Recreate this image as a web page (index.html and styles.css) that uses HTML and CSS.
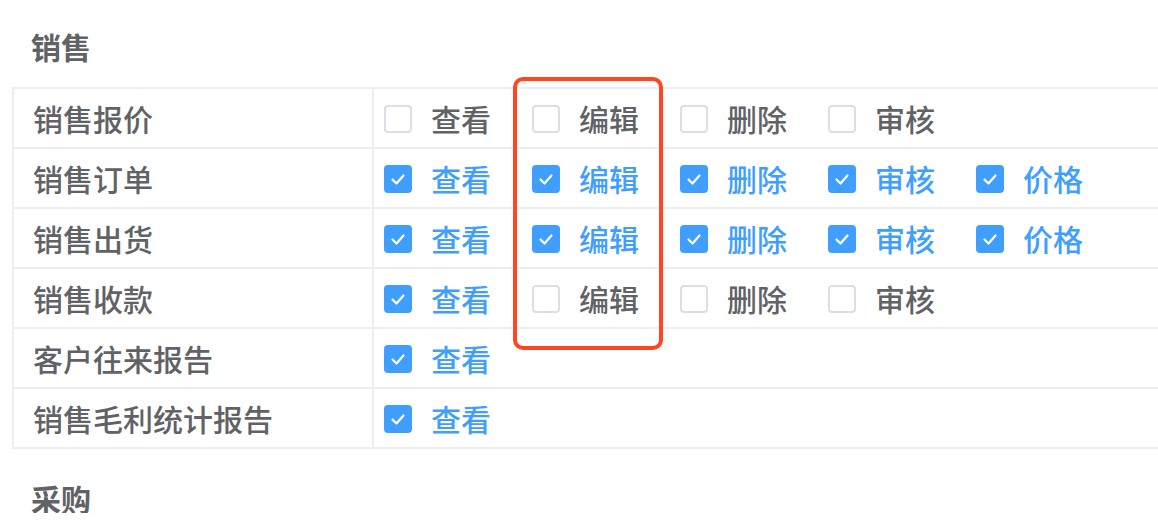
FILE: index.html
```html
<!DOCTYPE html>
<html lang="zh-CN">
<head>
  <meta charset="UTF-8" />
  <meta name="viewport" content="width=device-width, initial-scale=1.0"/>
  <title>权限设置</title>
  <link rel="stylesheet" href="styles.css">
</head>
<body>

  <div class="page">
    <h3 class="group-title">销售</h3>
    <div class="perm-table">
      <div class="perm-row">
        <div class="perm-name">销售报价</div>
        <div class="perm-ops">
          <label class="op"><span class="box"></span><span class="op-text">查看</span></label>
          <label class="op"><span class="box"></span><span class="op-text">编辑</span></label>
          <label class="op"><span class="box"></span><span class="op-text">删除</span></label>
          <label class="op"><span class="box"></span><span class="op-text">审核</span></label>
        </div>
      </div>
      <div class="perm-row">
        <div class="perm-name">销售订单</div>
        <div class="perm-ops">
          <label class="op checked"><span class="box"><svg viewBox="0 0 28 28"><polyline points="8.5,14.5 12.5,18.5 19.5,10.5"/></svg></span><span class="op-text">查看</span></label>
          <label class="op checked"><span class="box"><svg viewBox="0 0 28 28"><polyline points="8.5,14.5 12.5,18.5 19.5,10.5"/></svg></span><span class="op-text">编辑</span></label>
          <label class="op checked"><span class="box"><svg viewBox="0 0 28 28"><polyline points="8.5,14.5 12.5,18.5 19.5,10.5"/></svg></span><span class="op-text">删除</span></label>
          <label class="op checked"><span class="box"><svg viewBox="0 0 28 28"><polyline points="8.5,14.5 12.5,18.5 19.5,10.5"/></svg></span><span class="op-text">审核</span></label>
          <label class="op checked"><span class="box"><svg viewBox="0 0 28 28"><polyline points="8.5,14.5 12.5,18.5 19.5,10.5"/></svg></span><span class="op-text">价格</span></label>
        </div>
      </div>
      <div class="perm-row">
        <div class="perm-name">销售出货</div>
        <div class="perm-ops">
          <label class="op checked"><span class="box"><svg viewBox="0 0 28 28"><polyline points="8.5,14.5 12.5,18.5 19.5,10.5"/></svg></span><span class="op-text">查看</span></label>
          <label class="op checked"><span class="box"><svg viewBox="0 0 28 28"><polyline points="8.5,14.5 12.5,18.5 19.5,10.5"/></svg></span><span class="op-text">编辑</span></label>
          <label class="op checked"><span class="box"><svg viewBox="0 0 28 28"><polyline points="8.5,14.5 12.5,18.5 19.5,10.5"/></svg></span><span class="op-text">删除</span></label>
          <label class="op checked"><span class="box"><svg viewBox="0 0 28 28"><polyline points="8.5,14.5 12.5,18.5 19.5,10.5"/></svg></span><span class="op-text">审核</span></label>
          <label class="op checked"><span class="box"><svg viewBox="0 0 28 28"><polyline points="8.5,14.5 12.5,18.5 19.5,10.5"/></svg></span><span class="op-text">价格</span></label>
        </div>
      </div>
      <div class="perm-row">
        <div class="perm-name">销售收款</div>
        <div class="perm-ops">
          <label class="op checked"><span class="box"><svg viewBox="0 0 28 28"><polyline points="8.5,14.5 12.5,18.5 19.5,10.5"/></svg></span><span class="op-text">查看</span></label>
          <label class="op"><span class="box"></span><span class="op-text">编辑</span></label>
          <label class="op"><span class="box"></span><span class="op-text">删除</span></label>
          <label class="op"><span class="box"></span><span class="op-text">审核</span></label>
        </div>
      </div>
      <div class="perm-row">
        <div class="perm-name">客户往来报告</div>
        <div class="perm-ops">
          <label class="op checked"><span class="box"><svg viewBox="0 0 28 28"><polyline points="8.5,14.5 12.5,18.5 19.5,10.5"/></svg></span><span class="op-text">查看</span></label>
        </div>
      </div>
      <div class="perm-row">
        <div class="perm-name">销售毛利统计报告</div>
        <div class="perm-ops">
          <label class="op checked"><span class="box"><svg viewBox="0 0 28 28"><polyline points="8.5,14.5 12.5,18.5 19.5,10.5"/></svg></span><span class="op-text">查看</span></label>
        </div>
      </div>
    </div>

    <!-- highlight around the edit column -->
    <div class="highlight"></div>

    <h3 class="group-title next">采购</h3>
  </div>

</body>
</html>
```

FILE: styles.css
```css
body {
  margin: 0;
  background: #fff;
  font-family: "Noto Sans CJK SC", "Noto Sans", sans-serif;
  color: #606266;
  overflow: hidden;
}

.page {
  position: relative;
  padding-top: 30px;
}

.group-title {
  margin: 0 0 25px 31px;
  font-size: 30px;
  line-height: 32px;
  font-weight: 600;
  color: #606266;
}

.group-title.next {
  margin-top: 34px;
  margin-bottom: 0;
  line-height: 30px;
}

.perm-table {
  margin-left: 12px;
  width: 1200px;
  border: 2px solid #ebeef5;
  border-right: none;
}

.perm-row {
  display: flex;
  height: 58px;
  border-bottom: 2px solid #ebeef5;
}

.perm-row:last-child {
  border-bottom: none;
}

.perm-name {
  width: 339px;
  padding-left: 19px;
  border-right: 2px solid #ebeef5;
  display: flex;
  align-items: center;
  font-size: 30px;
  font-weight: 500;
}

.perm-ops {
  display: flex;
  align-items: center;
  padding-left: 10px;
}

.op {
  display: flex;
  align-items: center;
  width: 108px;
  margin-right: 40px;
  cursor: pointer;
}

.box {
  box-sizing: border-box;
  width: 28px;
  height: 28px;
  border: 2px solid #dcdfe6;
  border-radius: 4px;
  background: #fff;
  margin-top: 2px;
}

.box svg {
  display: block;
  width: 28px;
  height: 28px;
  margin: -2px;
}

.box polyline {
  fill: none;
  stroke: #fff;
  stroke-width: 2.2;
  stroke-linecap: round;
  stroke-linejoin: round;
}

.op-text {
  margin-left: 19px;
  font-size: 30px;
  line-height: 32px;
  font-weight: 500;
  color: #606266;
}

.op.checked .box {
  background: #409eff;
  border-color: #409eff;
}

.op.checked .op-text {
  color: #409eff;
}

.highlight {
  position: absolute;
  left: 513px;
  top: 77px;
  width: 150px;
  height: 273px;
  box-sizing: border-box;
  border: 4px solid #ff4521;
  border-radius: 10px;
}
```
